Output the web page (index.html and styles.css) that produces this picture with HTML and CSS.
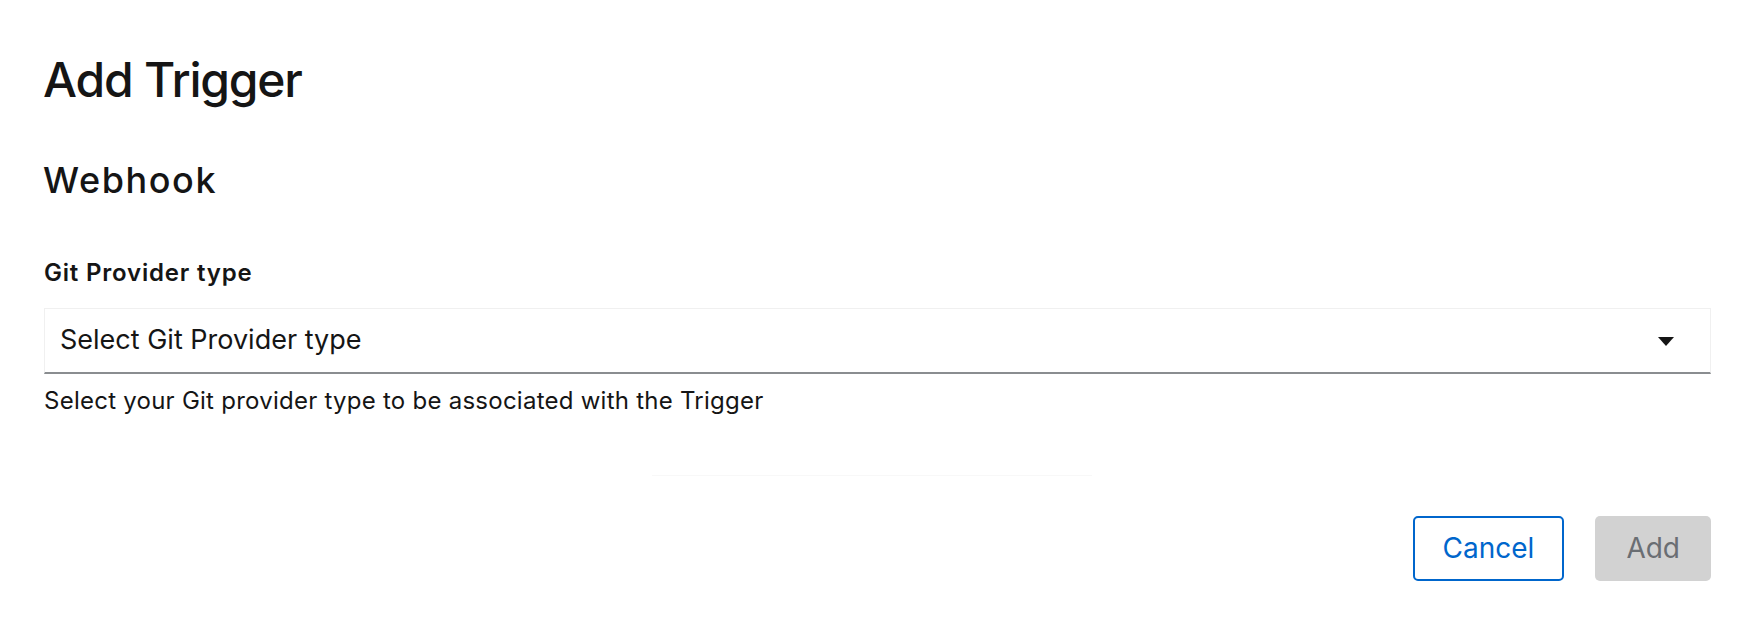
FILE: index.html
```html
<!DOCTYPE html>
<html lang="en">
<head>
<meta charset="utf-8">
<title>Add Trigger</title>
<link rel="stylesheet" href="styles.css">
</head>
<body>
<div class="modal">
  <h1 class="title">Add Trigger</h1>
  <h2 class="subtitle">Webhook</h2>
  <div class="form-group">
    <label class="label">Git Provider type</label>
    <div class="select">
      <span class="select-text">Select Git Provider type</span>
      <svg class="caret" width="16" height="9" viewBox="0 0 16 9"><polygon points="0,0 16,0 8,9" fill="#151515"/></svg>
    </div>
    <div class="helper">Select your Git provider type to be associated with the Trigger</div>
  </div>
  <div class="divider"></div>
  <div class="footer">
    <button class="btn btn-secondary">Cancel</button>
    <button class="btn btn-disabled">Add</button>
  </div>
</div>
</body>
</html>
```

FILE: styles.css
```css
html, body {
  margin: 0;
  padding: 0;
  background: #ffffff;
}
body {
  font-family: Inter, "Noto Sans", sans-serif;
  color: #151515;
}
.modal {
  padding: 50.5px 53px 0 44px;
  display: flex;
  flex-direction: column;
}
.title {
  margin: 0 0 0 -1px;
  font-size: 48px;
  line-height: 58px;
  font-weight: 500;
  letter-spacing: -1.2px;
}
.subtitle {
  margin: 49.5px 0 0 -1px;
  font-size: 36px;
  line-height: 44px;
  font-weight: 500;
  letter-spacing: 1.6px;
}
.form-group {
  display: flex;
  flex-direction: column;
  margin-top: 54.6px;
}
.label {
  font-size: 24px;
  line-height: 32px;
  font-weight: 600;
  letter-spacing: 0.8px;
}
.select {
  margin-top: 19.4px;
  height: 66px;
  box-sizing: border-box;
  border: 1px solid #f0f0f0;
  border-bottom: 2px solid #8a8d90;
  display: flex;
  align-items: center;
  justify-content: space-between;
  padding: 0 36px 0 15px;
}
.select-text {
  font-size: 27px;
  line-height: 36px;
}
.caret {
  display: block;
  margin-top: 2px;
}
.helper {
  margin-top: 10.6px;
  font-size: 24px;
  line-height: 32px;
  letter-spacing: 0.25px;
}
.divider {
  margin: 58.4px 0 0 608px;
  width: 440px;
  height: 1px;
  background: #f8f8f8;
}
.footer {
  margin-top: 40px;
  display: flex;
  justify-content: flex-end;
  gap: 31px;
}
.btn {
  height: 65px;
  box-sizing: border-box;
  border-radius: 5px;
  border: 2px solid transparent;
  padding: 0 29px;
  font-family: Inter, "Noto Sans", sans-serif;
  font-size: 28px;
  line-height: 36px;
  background: #ffffff;
  cursor: pointer;
}
.btn-secondary {
  border-color: #0066cc;
  color: #0066cc;
  padding: 0 28px;
}
.btn-disabled {
  background: #d2d2d2;
  color: #6a6e73;
}
```
